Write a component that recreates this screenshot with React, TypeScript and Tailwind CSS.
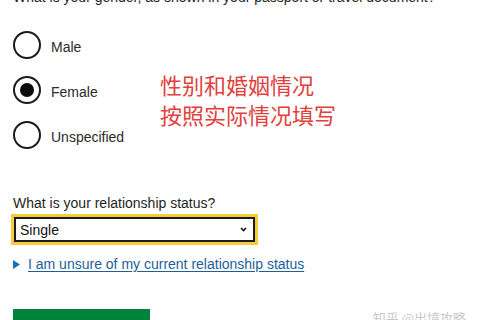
import React from "react";

function Radio({ label, checked }: { label: string; checked?: boolean }) {
  return (
    <div className="flex items-center h-[28px]">
      <div className="w-[28px] h-[28px] rounded-full border-2 border-[#1b1b1b] flex items-center justify-center shrink-0">
        {checked && <div className="w-[14px] h-[14px] rounded-full bg-[#0b0c0c]" />}
      </div>
      <span className="ml-[10px] pt-[3px] text-[14px] leading-[18px] text-[#2a2a2a]">{label}</span>
    </div>
  );
}

export default function App() {
  return (
    <div
      className="relative w-[480px] h-[320px] overflow-hidden bg-white"
      style={{ fontFamily: '"Liberation Sans", "Noto Sans CJK SC", sans-serif' }}
    >
      <div className="flex flex-col px-[13px]">
        <p className="-mt-[12px] text-[14px] leading-[18px] text-[#1f1f1f]">
          What is your gender, as shown in your passport or travel document?
        </p>
        <div className="flex mt-[25px]">
          <div className="w-[147px] flex flex-col gap-[17px]">
            <Radio label="Male" />
            <Radio label="Female" checked />
            <Radio label="Unspecified" />
          </div>
          <div
            className="pt-[38px] text-[22px] leading-[30px] text-[#e2403c]"
            style={{ fontFamily: '"Noto Sans CJK SC", sans-serif' }}
          >
            <div>性别和婚姻情况</div>
            <div>按照实际情况填写</div>
          </div>
        </div>
        <p className="mt-[45px] text-[14px] leading-[18px] text-[#1f1f1f]">What is your relationship status?</p>
        <div className="mt-[5px] ml-[1px] w-[241px] h-[25px] border-2 border-[#1b1b1b] shadow-[0_0_0_3px_#f5cc3c] flex items-center justify-between pl-[4px] pr-[6px]">
          <span className="text-[14px] leading-[18px] text-[#111]">Single</span>
          <svg width="7" height="5" viewBox="0 0 7 5">
            <path d="M1 1 L3.5 3.5 L6 1" stroke="#111" strokeWidth="1.6" fill="none" />
          </svg>
        </div>
        <div className="mt-[13px] flex items-center">
          <svg width="8" height="9" viewBox="0 0 8 9" className="shrink-0">
            <path d="M0 0 L7 4.5 L0 9 Z" fill="#1d70b8" />
          </svg>
          <a className="ml-[7px] text-[14px] leading-[18px] text-[#1d5f9a] underline underline-offset-2">
            I am unsure of my current relationship status
          </a>
        </div>
        <div className="mt-[36px] w-[137px] h-[38px] bg-[#00823b] text-white text-[15px] font-bold pl-[14px] pt-[8px] shadow-[0_2px_0_#002d18]">
          Save and continue
        </div>
      </div>
      <div
        className="absolute right-[14px] bottom-[-7px] text-[13px] text-[#c8c8c8]"
        style={{ fontFamily: '"Noto Sans CJK SC", sans-serif' }}
      >
        知乎 @出境攻略
      </div>
    </div>
  );
}
